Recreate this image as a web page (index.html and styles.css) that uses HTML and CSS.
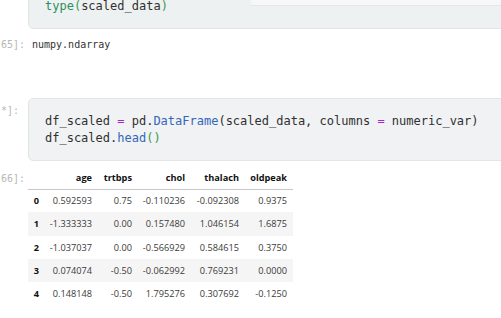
FILE: index.html
```html
<!DOCTYPE html>
<html>
<head>
    <title>Notebook</title>
    <link rel="stylesheet" href="styles.css">
</head>
<body>
    <div class="cell first">
        <div class="prompt"></div>
        <div class="input">
            <div class="topbar"></div>
            <pre><span class="builtin">type</span><span class="bracket">(</span>scaled_data<span class="bracket">)</span></pre>
        </div>
    </div>

    <div class="cell output numpy">
        <div class="prompt out">[65]:</div>
        <pre class="plain">numpy.ndarray</pre>
    </div>

    <div class="cell code2">
        <div class="prompt">[*]:</div>
        <div class="input">
            <pre>df_scaled <span class="op">=</span> pd.<span class="prop">DataFrame</span>(scaled_data, columns <span class="op">=</span> numeric_var)
df_scaled.<span class="prop">head</span><span class="bracket">()</span></pre>
        </div>
    </div>

    <div class="cell output frame">
        <div class="prompt out">[66]:</div>
        <table class="dataframe">
            <colgroup>
                <col class="c-idx"><col class="c-age"><col class="c-trt"><col class="c-chol"><col class="c-thal"><col class="c-old">
            </colgroup>
            <thead>
                <tr><th></th><th>age</th><th>trtbps</th><th>chol</th><th>thalach</th><th>oldpeak</th></tr>
            </thead>
            <tbody>
                <tr><th>0</th><td>0.592593</td><td>0.75</td><td>-0.110236</td><td>-0.092308</td><td>0.9375</td></tr>
                <tr><th>1</th><td>-1.333333</td><td>0.00</td><td>0.157480</td><td>1.046154</td><td>1.6875</td></tr>
                <tr><th>2</th><td>-1.037037</td><td>0.00</td><td>-0.566929</td><td>0.584615</td><td>0.3750</td></tr>
                <tr><th>3</th><td>0.074074</td><td>-0.50</td><td>-0.062992</td><td>0.769231</td><td>0.0000</td></tr>
                <tr><th>4</th><td>0.148148</td><td>-0.50</td><td>1.795276</td><td>0.307692</td><td>-0.1250</td></tr>
            </tbody>
        </table>
    </div>
</body>
</html>
```

FILE: styles.css
```css
body {
    margin: 0;
    background: #ffffff;
    overflow: hidden;
}
pre {
    margin: 0;
    font-family: "DejaVu Sans Mono", monospace;
    font-size: 12px;
    line-height: 17px;
    color: #303030;
}
.cell {
    display: flex;
    align-items: flex-start;
}
.prompt {
    width: 28px;
    flex: none;
    font-family: "DejaVu Sans Mono", monospace;
    font-size: 10px;
    line-height: 17px;
    color: #b8b8b8;
    white-space: nowrap;
    text-indent: -5px;
}
.input {
    position: relative;
    flex: 1;
    margin-right: -20px;
    padding: 14px 16px 13px;
    background: #f0f2f4;
    border: 1px solid #e2e5e8;
    border-radius: 5px;
}
.first {
    margin-top: -17px;
}
.first .input {
    background: #edf1f2;
}
.topbar {
    position: absolute;
    left: 222px;
    right: 0;
    top: 16px;
    height: 5px;
    background: #f6f7f8;
    border-bottom: 1px solid #e4e7e9;
}
.numpy {
    margin-top: 7px;
}
.numpy .prompt {
    margin-right: 4px;
    width: 28px;
}
.plain {
    font-size: 10px;
    color: #333333;
}
.code2 {
    margin-top: 45px;
}
.code2 .prompt {
    padding-top: 4px;
}
.builtin {
    color: #2e8f5a;
}
.bracket {
    color: #3a9a4a;
}
.op {
    color: #aa22cc;
}
.prop {
    color: #3367b8;
}
.frame {
    margin-top: 6px;
}
.frame .prompt {
    padding-top: 3px;
}
.dataframe {
    border-collapse: collapse;
    table-layout: fixed;
    width: 265px;
    font-family: "Open Sans", sans-serif;
    font-size: 9.2px;
    color: #3a3a3a;
}
.c-idx { width: 17px; }
.c-age { width: 53px; }
.c-trt { width: 40px; }
.c-chol { width: 53px; }
.c-thal { width: 54px; }
.c-old { width: 48px; }
.dataframe th,
.dataframe td {
    padding: 0 6px 0 0;
    text-align: right;
    white-space: nowrap;
}
.dataframe th {
    font-weight: bold;
    color: #111111;
}
.dataframe thead tr {
    height: 22px;
    border-bottom: 1px solid #c8c8c8;
}
.dataframe tbody tr {
    height: 23.3px;
}
.dataframe tbody tr:nth-child(even) {
    background: #f5f5f5;
}
```
